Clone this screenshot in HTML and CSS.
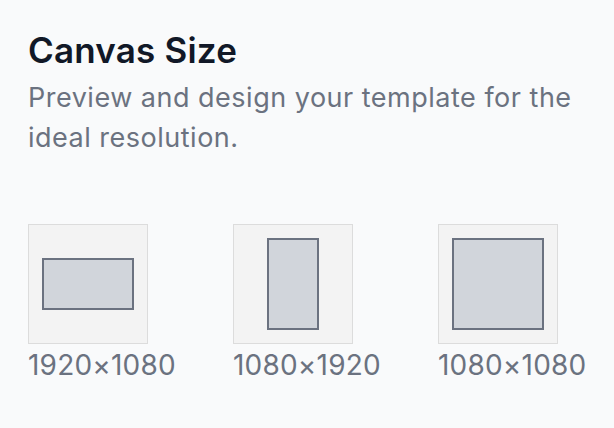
FILE: index.html
```html
<!DOCTYPE html>
<html lang="en">
<head>
    <meta charset="UTF-8">
    <meta name="viewport" content="width=device-width, initial-scale=1.0">
    <title>Canvas Size</title>
    <link rel="stylesheet" href="styles.css">
</head>
<body>
    <section class="panel">
        <h2 class="panel-title">Canvas Size</h2>
        <p class="panel-desc">Preview and design your template for the ideal resolution.</p>

        <div class="sizes">
            <div class="size">
                <div class="size-box">
                    <div class="size-shape landscape"></div>
                </div>
                <span class="size-label">1920×1080</span>
            </div>
            <div class="size">
                <div class="size-box">
                    <div class="size-shape portrait"></div>
                </div>
                <span class="size-label">1080×1920</span>
            </div>
            <div class="size">
                <div class="size-box">
                    <div class="size-shape square"></div>
                </div>
                <span class="size-label">1080×1080</span>
            </div>
        </div>
    </section>
</body>
</html>
```

FILE: styles.css
```css
body {
    margin: 0;
    background-color: #f9fafb;
    font-family: Inter, "Noto Sans", sans-serif;
}
.panel {
    padding: 29px 28px;
}
.panel-title {
    margin: 0;
    font-size: 35px;
    line-height: 42px;
    font-weight: 600;
    letter-spacing: 0.2px;
    color: #111827;
}
.panel-desc {
    margin: 7px 0 0;
    font-size: 27px;
    line-height: 40px;
    letter-spacing: 0.5px;
    color: #6b7280;
}
.sizes {
    display: grid;
    grid-template-columns: repeat(3, 150px);
    column-gap: 55px;
    margin-top: 66px;
}
.size {
    display: flex;
    flex-direction: column;
}
.size-box {
    width: 118px;
    height: 118px;
    border: 1px solid #dcdcdc;
    background-color: #f3f3f3;
    display: flex;
    align-items: center;
    justify-content: center;
}
.size-shape {
    box-sizing: border-box;
    background-color: #d1d5db;
    border: 2px solid #6b7280;
}
.landscape {
    width: 92px;
    height: 52px;
}
.portrait {
    width: 52px;
    height: 92px;
}
.square {
    width: 92px;
    height: 92px;
}
.size-label {
    margin-top: 4px;
    font-size: 28px;
    line-height: 34px;
    letter-spacing: 0.2px;
    color: #6b7280;
    white-space: nowrap;
}
```
